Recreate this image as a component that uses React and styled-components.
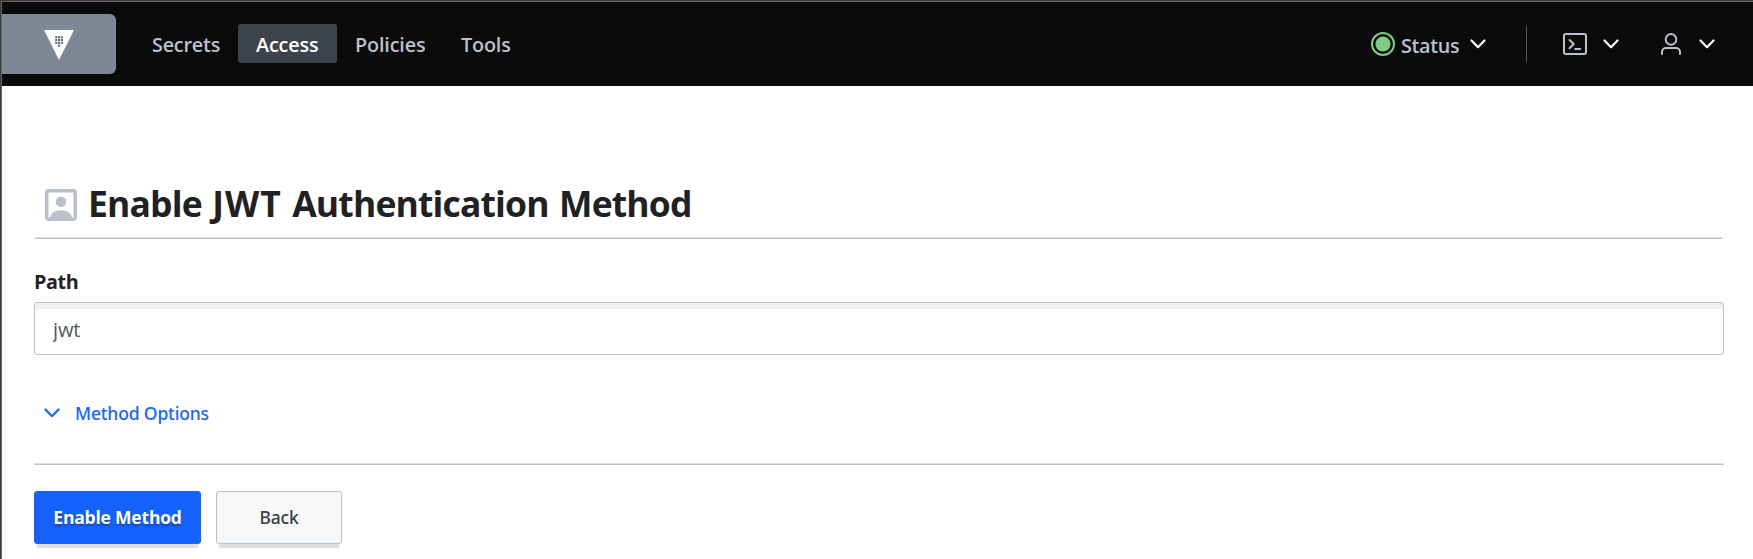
import React from "react";
import styled, { createGlobalStyle } from "styled-components";

const GlobalStyle = createGlobalStyle`
  *, *::before, *::after { box-sizing: border-box; }
  html, body { margin: 0; padding: 0; background: #fff; }
  body {
    font-family: "Segoe UI", "Open Sans", "Noto Sans", sans-serif;
    color: #1f2124;
    overflow: hidden;
  }
  svg { display: block; flex: none; }
`;

const Window = styled.div`
  height: 559px;
  border-top: 1px solid #3c3c3c;
  border-left: 1px solid #3c3c3c;
`;

const Page = styled.div`
  height: 558px;
  border-top: 1px solid #666;
  border-left: 1px solid #666;
`;

const Header = styled.header`
  display: flex;
  align-items: center;
  height: 84px;
  padding-right: 38px;
  background: #0a0a0a;
`;

const Brand = styled.a`
  display: flex;
  align-items: center;
  width: 114px;
  height: 60px;
  margin-right: 18px;
  padding: 2px 0 0 42px;
  background: #7d8796;
  border-radius: 0 6px 6px 0;
`;

const Nav = styled.nav`
  display: flex;
  margin-top: -1px;
`;

const NavItem = styled.a`
  width: ${(p) => p.$width}px;
  height: 39px;
  padding-left: 18px;
  border-radius: 3px;
  font-size: 19.8px;
  line-height: 42px;
  font-weight: 600;
  letter-spacing: ${(p) => p.$spacing}px;
  white-space: nowrap;
  color: ${(p) => (p.$active ? "#fff" : "#bac1cc")};
  background: ${(p) => (p.$active ? "#3d434d" : "transparent")};
`;

const Tools = styled.div`
  display: flex;
  align-items: center;
  margin-left: auto;
`;

const StatusLabel = styled.span`
  width: 69px;
  margin-left: 6px;
  padding-top: 3px;
  font-size: 19.8px;
  line-height: 40px;
  font-weight: 600;
  letter-spacing: -0.3px;
  color: #bac1cc;
`;

const Divider = styled.span`
  width: 1px;
  height: 36px;
  margin: 0 36px 0 40px;
  background: #525761;
`;

const ToolButton = styled.span`
  display: flex;
  align-items: center;
  gap: ${(p) => p.$gap}px;
  margin-right: ${(p) => p.$after || 0}px;
`;

const Content = styled.main`
  padding: 94px 29px 0 32px;
`;

const TitleRow = styled.div`
  display: flex;
  align-items: center;
  height: 59px;
  margin: 0 2px 0 1px;
  padding: 0 0 8px 10px;
  border-bottom: 1px solid #bac1cc;
  box-shadow: inset 0 -1px #dcdfe5;
`;

const Title = styled.h1`
  margin: -5px 0 0 11px;
  font-size: 35.5px;
  line-height: 48px;
  font-weight: 700;
  letter-spacing: -0.85px;
  word-spacing: 2px;
  white-space: nowrap;
`;

const Acronym = styled.span`
  letter-spacing: 1px;
`;

const Label = styled.label`
  display: block;
  margin-top: 28px;
  height: 35px;
  font-size: 19.8px;
  line-height: 30px;
  font-weight: 700;
  letter-spacing: -0.4px;
`;

const Input = styled.input`
  display: block;
  width: 100%;
  height: 53px;
  padding: 2px 18px 0;
  border: 1px solid #bac1cc;
  border-radius: 3px;
  outline: none;
  background: #fff;
  box-shadow: inset 0 6px 1px #f0f0f2;
  font-family: inherit;
  font-size: 20px;
  color: #54575c;
  letter-spacing: -0.1px;
`;

const Toggle = styled.button`
  display: flex;
  align-items: center;
  gap: 15px;
  height: 30px;
  margin: 43px 0 0 10px;
  padding: 0;
  border: 0;
  background: none;
  font-family: "Segoe UI", "Noto Sans", sans-serif;
  font-size: 17.5px;
  font-weight: 500;
  letter-spacing: -0.15px;
  color: #1563ff;
`;

const ToggleText = styled.span`
  padding-bottom: 1px;
`;

const Actions = styled.div`
  display: flex;
  gap: 15px;
  margin-top: 35px;
  padding-top: 27px;
  border-top: 1px solid #dcdfe5;
  box-shadow: inset 0 1px #bac1cc;
`;

const Button = styled.button`
  width: ${(p) => p.$width}px;
  height: 53px;
  padding: 0 0 1px;
  border: 1px solid ${(p) => (p.$primary ? "#1563ff" : "#bac1cc")};
  border-radius: 3px;
  background: ${(p) => (p.$primary ? "#1563ff" : "#f7f8fa")};
  box-shadow: 0 7px 1px -3px #dfdfdf;
  font-family: ${(p) => (p.$primary ? "inherit" : '"Segoe UI", "Noto Sans", sans-serif')};
  font-size: 17.5px;
  font-weight: ${(p) => (p.$primary ? 700 : 500)};
  letter-spacing: -0.2px;
  white-space: nowrap;
  color: ${(p) => (p.$primary ? "#fff" : "#3a3d42")};
  text-shadow: ${(p) => (p.$primary ? "0 2px 2px rgba(20, 50, 120, 0.6)" : "none")};
`;

const Chevron = ({ color = "#fff" }) => (
  <svg width="16" height="10" viewBox="0 0 16 10" fill="none" stroke={color} strokeWidth="2.2" strokeLinecap="round" strokeLinejoin="round">
    <path d="M1.5 1.5 8 8.2l6.5-6.7" />
  </svg>
);

const dots = [
  [0, 0], [1, 0], [2, 0],
  [0, 1], [1, 1], [2, 1],
  [0, 2], [1, 2], [2, 2],
  [1, 3],
];

const VaultLogo = () => (
  <svg width="30" height="30" viewBox="0 0 30 30">
    <path d="M0 0h30L15 30z" fill="#fff" />
    {dots.map(([x, y]) => (
      <rect key={`${x}-${y}`} x={11.2 + x * 2.8} y={6.2 + y * 2.8} width="2.1" height="2.1" fill="#646c79" />
    ))}
  </svg>
);

const StatusIcon = () => (
  <svg width="24" height="24" viewBox="0 0 24 24">
    <circle cx="12" cy="12" r="11" fill="none" stroke="#7dce81" strokeWidth="2" />
    <circle cx="12" cy="12" r="7.6" fill="#7dce81" />
  </svg>
);

const TerminalIcon = () => (
  <svg width="24" height="22" viewBox="0 0 24 22" fill="none" stroke="#bac1cc" strokeWidth="2" strokeLinecap="round" strokeLinejoin="round">
    <rect x="1" y="1" width="22" height="20" rx="2" />
    <path d="m6.5 7 4.2 4-4.2 4.2M12.2 16h5" />
  </svg>
);

const UserIcon = () => (
  <svg width="20" height="22" viewBox="0 0 20 22" fill="none" stroke="#bac1cc" strokeWidth="2" strokeLinecap="round">
    <circle cx="10" cy="6.4" r="5.3" />
    <path d="M1 21v-2a4 4 0 0 1 4-4h10a4 4 0 0 1 4 4v2" />
  </svg>
);

const MethodIcon = () => (
  <svg width="32" height="32" viewBox="0 0 32 32">
    <rect x="1.75" y="1.75" width="28.5" height="28.5" rx="2" fill="none" stroke="#bac1cc" strokeWidth="3.5" />
    <circle cx="16" cy="12.7" r="5.3" fill="#bac1cc" />
    <path d="M5.3 28.5c0-4.5 5-7.3 10.7-7.3s10.7 2.8 10.7 7.3V30H5.3z" fill="#bac1cc" />
  </svg>
);

export default function App() {
  return (
    <Window>
      <GlobalStyle />
      <Page>
        <Header>
          <Brand><VaultLogo /></Brand>
          <Nav>
            <NavItem $width={104} $spacing={-0.2}>Secrets</NavItem>
            <NavItem $width={99} $spacing={-0.15} $active>Access</NavItem>
            <NavItem $width={106} $spacing={-0.15}>Policies</NavItem>
            <NavItem $width={80} $spacing={-0.15}>Tools</NavItem>
          </Nav>
          <Tools>
            <StatusIcon />
            <StatusLabel>Status</StatusLabel>
            <Chevron />
            <Divider />
            <ToolButton $gap={16} $after={42}><TerminalIcon /><Chevron /></ToolButton>
            <ToolButton $gap={18}><UserIcon /><Chevron /></ToolButton>
          </Tools>
        </Header>
        <Content>
          <TitleRow>
            <MethodIcon />
            <Title>Enable <Acronym>JWT</Acronym> Authentication Method</Title>
          </TitleRow>
          <Label htmlFor="path">Path</Label>
          <Input id="path" defaultValue="jwt" />
          <Toggle>
            <Chevron color="#1563ff" />
            <ToggleText>Method Options</ToggleText>
          </Toggle>
          <Actions>
            <Button $width={167} $primary>Enable Method</Button>
            <Button $width={126}>Back</Button>
          </Actions>
        </Content>
      </Page>
    </Window>
  );
}
